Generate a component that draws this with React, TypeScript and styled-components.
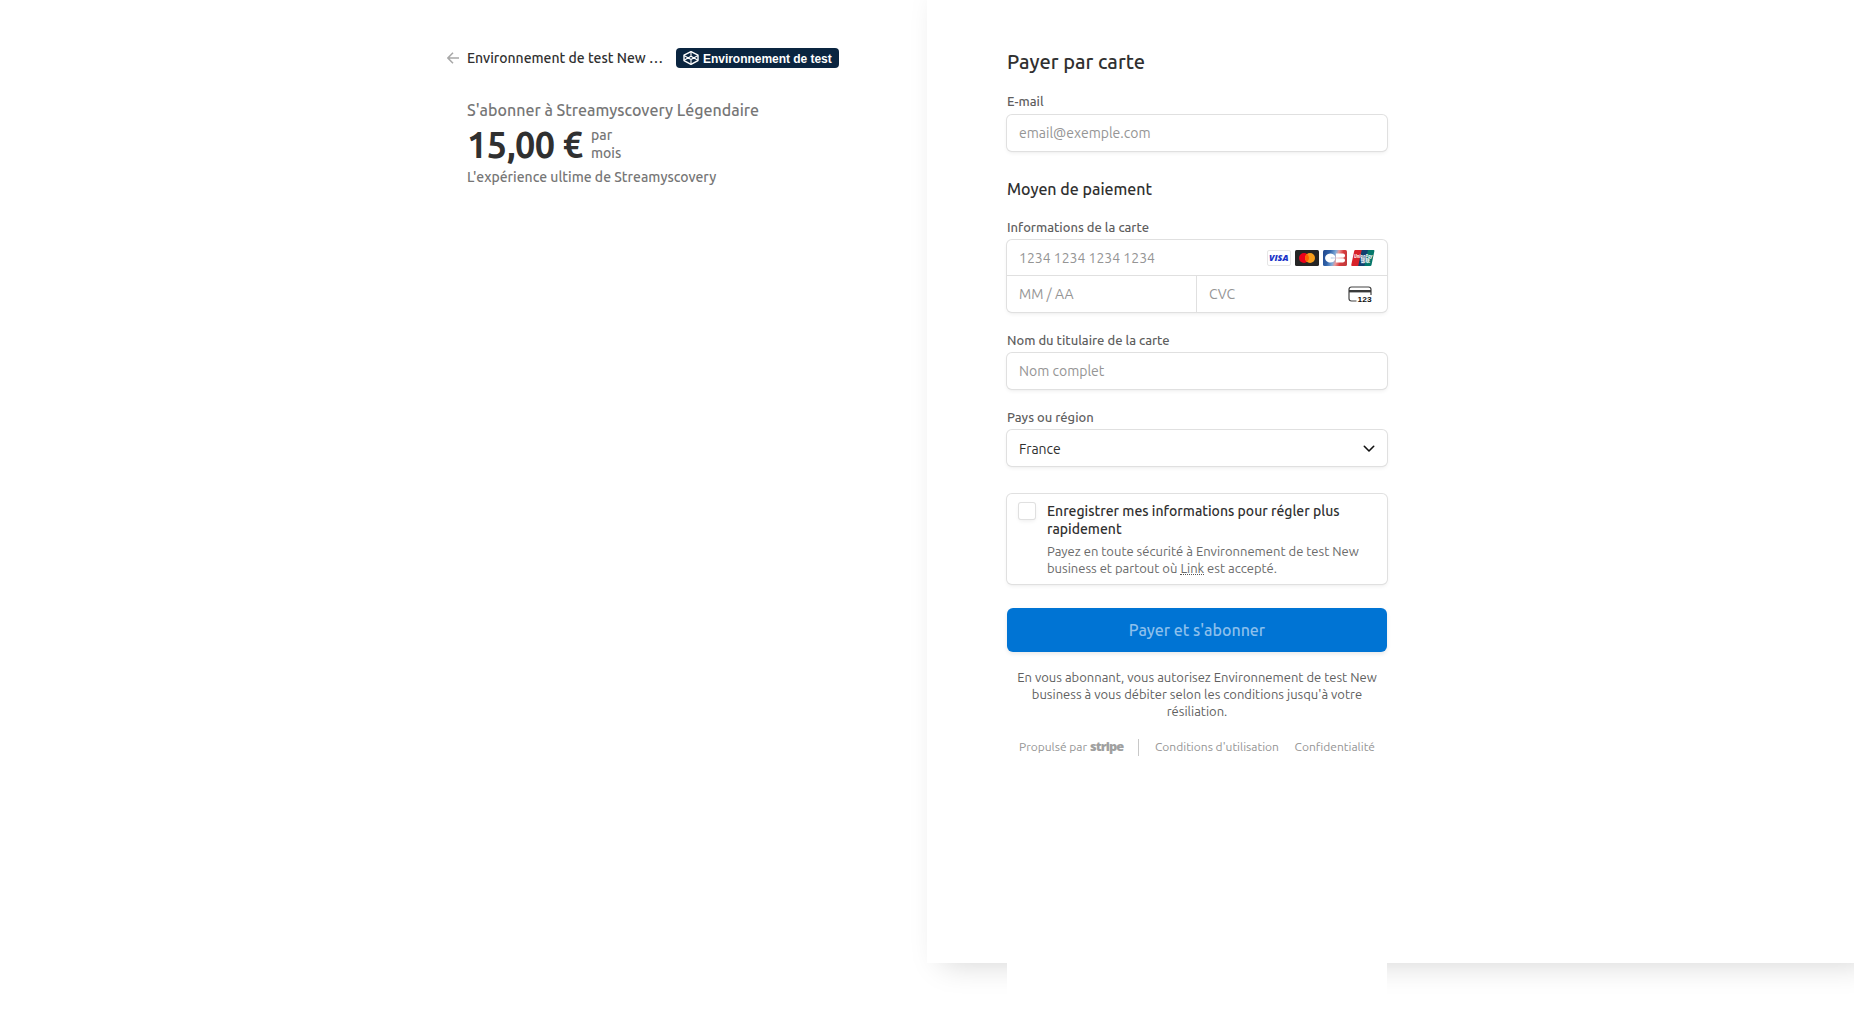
import React from "react";
import styled, { createGlobalStyle } from "styled-components";

const GlobalStyle = createGlobalStyle`
  * { box-sizing: border-box; }
  body {
    margin: 0;
    background: #fff;
    color: #303030;
    font-family: Ubuntu, "Noto Sans", sans-serif;
    overflow: hidden;
  }
  p, h1, h2 { margin: 0; font-weight: inherit; }
`;

const Page = styled.div`
  display: grid;
  grid-template-columns: 1fr 1fr;
  height: 1011px;
`;

/* Order summary */
const Summary = styled.section`
  display: flex;
  flex-direction: column;
  width: 393px;
  margin-left: 447px;
  padding-top: 48px;
`;

const BusinessBar = styled.header`
  display: flex;
  align-items: center;
  height: 20px;
  margin-right: 1px;
`;

const BackIcon = styled.svg`
  width: 12px;
  height: 12px;
  margin-right: 8px;
  color: #a8a8a8;
`;

const BusinessName = styled.span`
  font-size: 14px;
  line-height: 20px;
  font-weight: 500;
  white-space: nowrap;
`;

const TestBadge = styled.span`
  display: flex;
  align-items: center;
  gap: 4px;
  width: 163px;
  height: 20px;
  margin-left: auto;
  padding-left: 7px;
  border-radius: 4px;
  background: #0a2540;
  color: #fff;
  font: 700 12px/20px "Liberation Sans", Arial, sans-serif;
  white-space: nowrap;
  svg { width: 16px; height: 16px; flex: none; }
`;

const BadgeLabel = styled.span`
  padding-top: 1px;
  letter-spacing: -0.03px;
`;

const Product = styled.div`
  display: flex;
  flex-direction: column;
  margin: 30px 0 0 20px;
  color: #767676;
  white-space: nowrap;
`;

const ProductTitle = styled.h1`
  font-size: 16px;
  line-height: 24px;
  font-weight: 500;
`;

const PriceRow = styled.div`
  display: flex;
  margin: 2px 0 3px;
  height: 40px;
`;

const Price = styled.span`
  width: 124px;
  padding-top: 1px;
  color: #303030;
  font-size: 36px;
  line-height: 40px;
  font-weight: 600;
  letter-spacing: -0.48px;
`;

const Interval = styled.span`
  margin-top: 2px;
  font-size: 14px;
  line-height: 18px;
  font-weight: 500;
`;

const Description = styled.p`
  font-size: 14px;
  line-height: 20px;
  font-weight: 500;
`;

/* Payment panel */
const Panel = styled.section`
  height: 963px;
  padding-left: 80px;
  background: #fff;
  box-shadow: 15px 0 30px 0 rgba(0, 0, 0, 0.18);
`;

const Form = styled.div`
  display: flex;
  flex-direction: column;
  width: 380px;
  height: 1011px;
  padding-top: 50px;
  background: #fff;
`;

const Title = styled.h1`
  font-size: 20px;
  line-height: 24px;
  font-weight: 500;
`;

const Subtitle = styled.h2`
  margin-top: 28px;
  font-size: 16px;
  line-height: 20px;
  font-weight: 500;
`;

const Field = styled.div<{ $top?: number; $gap?: number }>`
  display: flex;
  flex-direction: column;
  gap: ${(p) => p.$gap ?? 5}px;
  margin-top: ${(p) => p.$top ?? 20}px;
`;

const Label = styled.span`
  color: #5f5f5f;
  font-size: 13px;
  line-height: 16px;
  font-weight: 500;
`;

const Box = styled.div`
  border-radius: 5px;
  background: #fff;
  box-shadow: 0 0 0 1px #e0e0e0, 0 2px 4px 0 rgba(0, 0, 0, 0.07),
    0 1px 1.5px 0 rgba(0, 0, 0, 0.05);
`;

const Row = styled.div`
  display: flex;
  align-items: center;
  justify-content: space-between;
  flex: 1;
  height: 36px;
  padding: 0 12px;
`;

const NumberRow = styled(Row)`
  border-bottom: 1px solid #e0e0e0;
`;

const SelectRow = styled(Row)`
  padding-top: 2px;
`;

const CardSplit = styled.div`
  display: flex;
`;

const CvcRow = styled(Row)`
  flex: none;
  width: 191px;
  padding-right: 15px;
  border-left: 1px solid #e0e0e0;
`;

const Value = styled.span<{ $filled?: boolean }>`
  color: ${(p) => (p.$filled ? "#303030" : "#959595")};
  font-size: 14px;
  line-height: 20px;
`;

const Brands = styled.span`
  display: flex;
  gap: 4px;
  svg { width: 24px; height: 16px; overflow: visible; }
`;

const SaveCard = styled(Box)`
  display: flex;
  gap: 12px;
  height: 90px;
  margin-top: 28px;
  padding: 8px 12px;
`;

const Checkbox = styled.span`
  flex: none;
  width: 16px;
  height: 16px;
  margin-top: 1px;
  border-radius: 2px;
  background: #fff;
  box-shadow: 0 0 0 1px #e0e0e0, 0 2px 4px rgba(0, 0, 0, 0.08);
`;

const SaveText = styled.div`
  display: flex;
  flex-direction: column;
  gap: 5px;
  white-space: nowrap;
`;

const SaveTitle = styled.p`
  font-size: 14px;
  line-height: 18px;
  font-weight: 500;
`;

const SaveNote = styled.p`
  color: #6a6a6a;
  font-size: 13px;
  line-height: 17px;
`;

const LinkWord = styled.span`
  display: inline-block;
  border-bottom: 1px dotted #555;
  line-height: 12px;
`;

const Submit = styled.button`
  height: 44px;
  margin-top: 24px;
  padding: 0;
  border: 0;
  border-radius: 6px;
  background: #0074d4;
  color: #8dc0ec;
  font: 500 16px/24px Ubuntu, "Noto Sans", sans-serif;
  box-shadow: 0 2px 4px rgba(0, 0, 0, 0.09);
`;

const Terms = styled.p`
  margin-top: 17px;
  color: #5f5f5f;
  font-size: 13px;
  line-height: 17px;
  text-align: center;
  white-space: nowrap;
`;

const Footer = styled.footer`
  display: flex;
  align-items: center;
  height: 18px;
  margin-top: 18px;
  padding: 0 12px;
  color: #959595;
  font-size: 12px;
  line-height: 18px;
  white-space: nowrap;
`;

const Powered = styled.span`
  display: flex;
  gap: 3px;
  width: 119px;
`;

const Wordmark = styled.b`
  color: #a0a0a0;
  font-family: "Open Sans", sans-serif;
  font-size: 12.8px;
  line-height: 17px;
  font-weight: 800;
  letter-spacing: -0.95px;
`;

const Divider = styled.span`
  width: 1px;
  height: 17px;
  margin-right: 16px;
  background: #c8c8c8;
`;

const FooterLink = styled.span`
  & + & { margin-left: auto; }
`;

const Visa = () => (
  <svg viewBox="0 0 24 16">
    <rect x=".5" y=".5" width="23" height="15" rx="1.5" fill="#fff" stroke="#e6e6e6" />
    <text x="2" y="11" textLength="19.5" lengthAdjust="spacingAndGlyphs" fontFamily="Open Sans" fontSize="8.6" fontWeight="800" fontStyle="italic" fill="#1a34c8">VISA</text>
  </svg>
);

const Mastercard = () => (
  <svg viewBox="0 0 24 16">
    <rect width="24" height="16" rx="1.5" fill="#252525" />
    <circle cx="9" cy="8" r="5" fill="#eb001b" />
    <circle cx="15" cy="8" r="5" fill="#f79e1b" />
    <path d="M12 4a5 5 0 0 1 0 8a5 5 0 0 1 0-8z" fill="#ff5f00" />
  </svg>
);

const CartesBancaires = () => (
  <svg viewBox="0 0 24 16">
    <defs>
      <linearGradient id="cb" x1="0" x2="1" y1=".3" y2=".5">
        <stop offset="0" stopColor="#244b91" />
        <stop offset=".25" stopColor="#2f62a9" />
        <stop offset=".48" stopColor="#82abd8" />
        <stop offset=".6" stopColor="#e99a9a" />
        <stop offset=".78" stopColor="#d83a3c" />
        <stop offset="1" stopColor="#c43a3b" />
      </linearGradient>
    </defs>
    <rect width="24" height="16" rx="1.5" fill="url(#cb)" />
    <path d="M12.3 7.7H7.8V8.3H12.3C12.2 11 10 12.6 7.5 12.6C4.5 12.6 2.1 10.6 2.1 8C2.1 5.4 4.5 3.4 7.5 3.4C10 3.4 12.2 5 12.3 7.7Z" fill="#fff" />
    <path d="M12.9 3.6H20a2 2 0 0 1 0 4.1H12.9ZM12.9 8.3H20a2 2 0 0 1 0 4.1H12.9Z" fill="#fff" />
  </svg>
);

const UnionPay = () => (
  <svg viewBox="0 0 24 16">
    <path d="M4.2 0H12L8.4 16H1.2Q0 16 .3 14.8L3.2 1Q3.4 0 4.2 0Z" fill="#d8222a" />
    <path d="M10.7 0H18L14.5 16H7.2Z" fill="#12406f" />
    <path d="M17 0H22.6Q23.6 0 23.4 1L20.5 15Q20.3 16 19.3 16H13.4Z" fill="#04776b" />
    <text x="3" y="7.6" textLength="18.5" lengthAdjust="spacingAndGlyphs" fontFamily="Noto Sans" fontSize="5.3" fontWeight="700" fontStyle="italic" fill="#fff">UnionPay</text>
    <text x="9.5" y="12.4" textLength="9.5" lengthAdjust="spacingAndGlyphs" fontFamily="Noto Sans CJK SC" fontSize="4.4" fontWeight="700" fill="#fff">银联</text>
  </svg>
);

const CvcIcon = () => (
  <svg width="24" height="17" viewBox="0 0 24 17">
    <path d="M8.5 15H3.5Q1 15 1 12.5V3.5Q1 1 3.5 1H20.5Q23 1 23 3.5V9" fill="none" stroke="#444" strokeWidth="1.2" />
    <rect x="1" y="4" width="22" height="2.4" fill="#3a3a3a" />
    <text x="9.6" y="15.8" textLength="14" lengthAdjust="spacingAndGlyphs" fontFamily="Liberation Sans" fontSize="7.6" fontWeight="700" fill="#111">123</text>
  </svg>
);

export default function App() {
  return (
    <>
      <GlobalStyle />
      <Page>
        <Summary>
          <BusinessBar>
            <BackIcon viewBox="0 0 12 12" fill="none" stroke="currentColor" strokeWidth="1.5">
              <path d="M12 6H1M6 .8L.9 6L6 11.2" />
            </BackIcon>
            <BusinessName>Environnement de test New …</BusinessName>
            <TestBadge>
              <svg viewBox="0 0 16 16" fill="none" stroke="#fff" strokeWidth="1.4" strokeLinejoin="round">
                <path d="M8 1.6L15 5.2V10.6L8 14.4L1 10.6V5.2Z" />
                <path d="M1 5.4L8 9.4L15 5.4M1 10.2L8 6.2L15 10.2M8 1.6V6.2M8 9.4V14.2" strokeWidth="1.1" />
              </svg>
              <BadgeLabel>Environnement de test</BadgeLabel>
            </TestBadge>
          </BusinessBar>
          <Product>
            <ProductTitle>S'abonner à Streamyscovery Légendaire</ProductTitle>
            <PriceRow>
              <Price>15,00 €</Price>
              <Interval>par<br />mois</Interval>
            </PriceRow>
            <Description>L'expérience ultime de Streamyscovery</Description>
          </Product>
        </Summary>

        <Panel>
          <Form>
            <Title>Payer par carte</Title>
            <Field $top={19} $gap={6}>
              <Label>E-mail</Label>
              <Box><Row><Value>email@exemple.com</Value></Row></Box>
            </Field>

            <Subtitle>Moyen de paiement</Subtitle>
            <Field>
              <Label>Informations de la carte</Label>
              <Box>
                <NumberRow>
                  <Value>1234 1234 1234 1234</Value>
                  <Brands><Visa /><Mastercard /><CartesBancaires /><UnionPay /></Brands>
                </NumberRow>
                <CardSplit>
                  <Row><Value>MM / AA</Value></Row>
                  <CvcRow><Value>CVC</Value><CvcIcon /></CvcRow>
                </CardSplit>
              </Box>
            </Field>
            <Field>
              <Label>Nom du titulaire de la carte</Label>
              <Box><Row><Value>Nom complet</Value></Row></Box>
            </Field>
            <Field>
              <Label>Pays ou région</Label>
              <Box>
                <SelectRow>
                  <Value $filled>France</Value>
                  <svg width="12" height="8" viewBox="0 0 12 8" fill="none" stroke="#111" strokeWidth="1.6" strokeLinecap="round" strokeLinejoin="round">
                    <path d="M1.3 1.3L6 6L10.7 1.3" />
                  </svg>
                </SelectRow>
              </Box>
            </Field>

            <SaveCard>
              <Checkbox />
              <SaveText>
                <SaveTitle>Enregistrer mes informations pour régler plus<br />rapidement</SaveTitle>
                <SaveNote>
                  Payez en toute sécurité à Environnement de test New<br />
                  business et partout où <LinkWord>Link</LinkWord> est accepté.
                </SaveNote>
              </SaveText>
            </SaveCard>

            <Submit>Payer et s'abonner</Submit>
            <Terms>
              En vous abonnant, vous autorisez Environnement de test New<br />
              business à vous débiter selon les conditions jusqu'à votre<br />
              résiliation.
            </Terms>

            <Footer>
              <Powered>Propulsé par<Wordmark>stripe</Wordmark></Powered>
              <Divider />
              <FooterLink>Conditions d'utilisation</FooterLink>
              <FooterLink>Confidentialité</FooterLink>
            </Footer>
          </Form>
        </Panel>
      </Page>
    </>
  );
}
